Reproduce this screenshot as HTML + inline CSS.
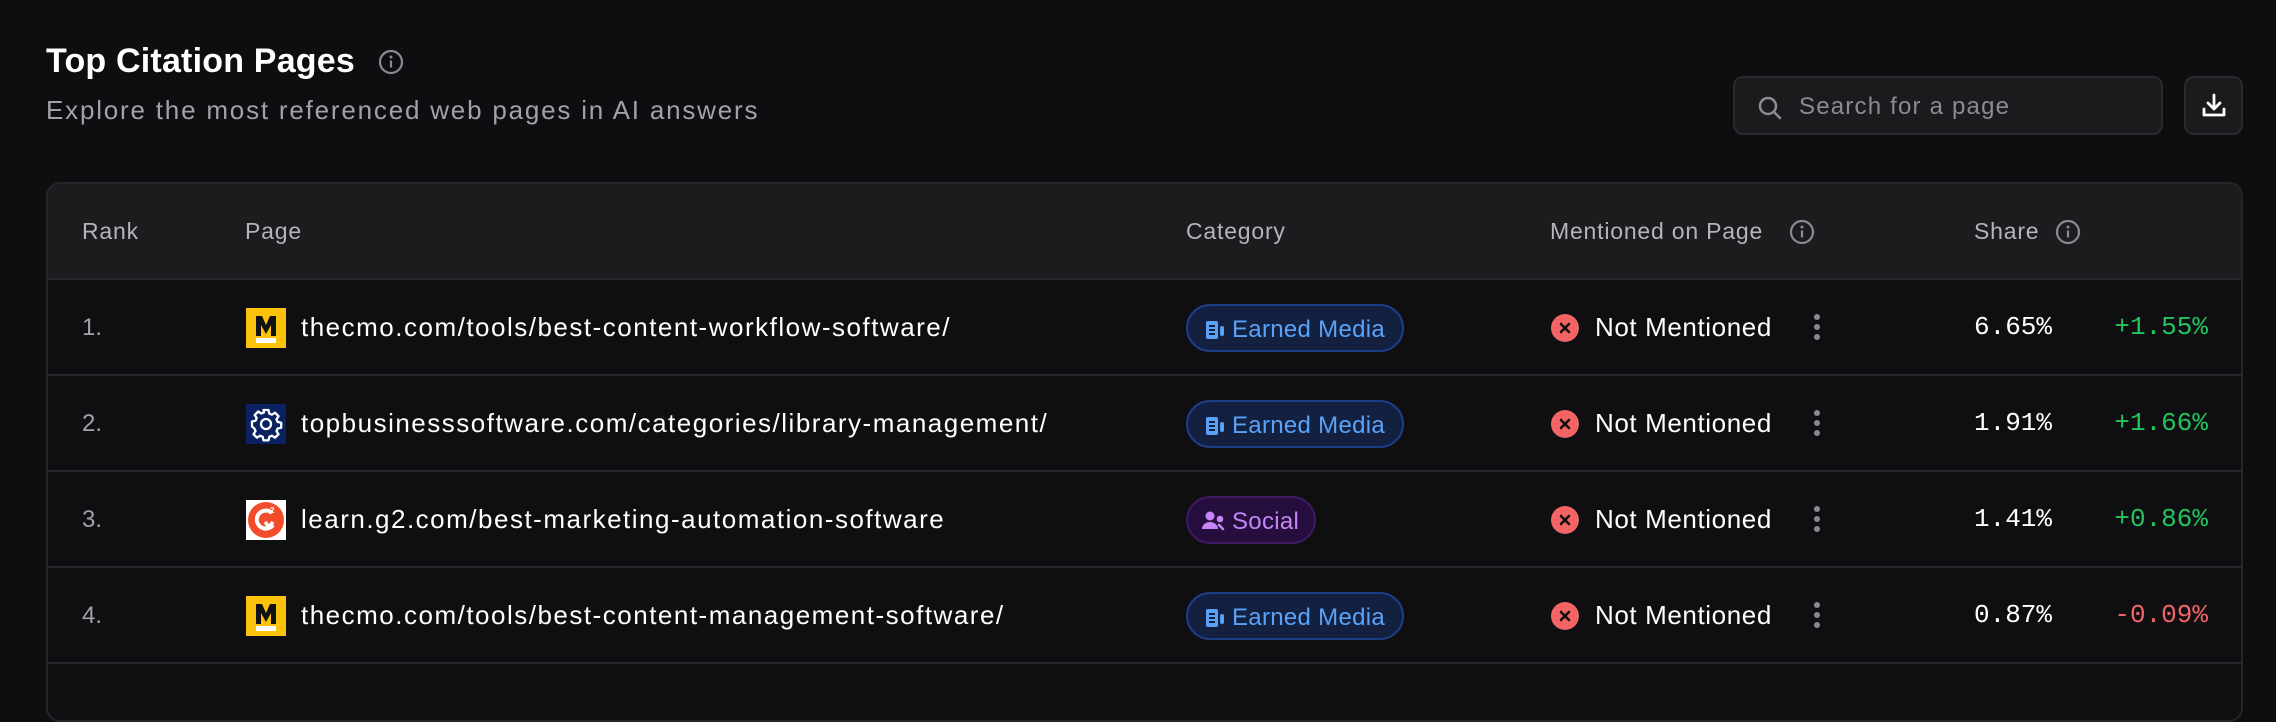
<!DOCTYPE html>
<html><head><meta charset="utf-8"><style>
*{box-sizing:border-box;margin:0;padding:0}
body{width:2276px;height:668px;overflow:hidden;background:#0e0e10;font-family:"Liberation Sans",sans-serif;color:#fff;position:relative}
.abs{position:absolute}
h1{position:absolute;left:46px;top:42px;font-size:34px;font-weight:bold;letter-spacing:0.2px}
.sub{left:46px;top:95px;font-size:26px;color:#a1a1aa;letter-spacing:1.8px}
.search{left:1733px;top:76px;width:430px;height:59px;border:2px solid #2a2a2e;border-radius:10px;background:#1b1b1e}
.search span{position:absolute;left:64px;top:15px;font-size:24px;color:#8b8b93;letter-spacing:1.2px}
.dl{left:2184px;top:76px;width:59px;height:59px;border:2px solid #2a2a2e;border-radius:10px;background:#1b1b1e}
.table{left:46px;top:182px;width:2197px;height:540px;border:2px solid #25252a;border-radius:14px;overflow:hidden;background:#0f0f11}
.head{position:absolute;left:0;top:0;right:0;height:96px;background:#1c1c1f;border-bottom:2px solid #25252a}
.th{position:absolute;top:34px;font-size:23px;color:#b4b4bb;letter-spacing:0.8px}
.row{position:absolute;left:0;right:0;height:96px;border-bottom:2px solid #25252a}
.c{position:absolute;top:32px;font-size:26px;white-space:nowrap}
.rank{left:34px;color:#a1a1aa;font-size:24px;top:34px}
.ico{position:absolute;left:198px;top:28px;width:40px;height:40px}
.url{left:253px;letter-spacing:1.5px}
.badge{position:absolute;left:1138px;top:24px;height:48px;border-radius:24px;font-size:24px;padding:10px 0 0 44px;letter-spacing:0.3px;white-space:nowrap}
.em{background:#13203f;border:2px solid #1b3f85;color:#5aa2f8;width:218px}
.so{background:#250e3d;border:2px solid #3f1a63;color:#c584f7;width:130px}
.x{position:absolute;left:1503px;top:34px;width:28px;height:28px;border-radius:50%;background:#f26465}
.nm{left:1547px;letter-spacing:0.6px}
.keb{position:absolute;left:1766px;top:34px;width:6px}
.keb i{display:block;width:6px;height:6px;border-radius:3px;background:#8a8a92;margin-bottom:4px}
.mono{font-family:"Liberation Mono",monospace;font-size:26px}
.share{left:1926px}
.chg{right:33px}
</style></head><body>
<h1>Top Citation Pages</h1>
<svg class="abs" style="left:377px;top:48px" width="28" height="28" viewBox="0 0 28 28"><circle cx="14" cy="14" r="11" fill="none" stroke="#8a8a92" stroke-width="2.2"/><circle cx="14" cy="9" r="1.5" fill="#8a8a92"/><path d="M14 12.5v7" stroke="#8a8a92" stroke-width="2.2"/></svg>
<div class="abs sub">Explore the most referenced web pages in AI answers</div>
<div class="abs search"><svg class="abs" style="left:22px;top:17px" width="26" height="26" viewBox="0 0 26 26"><circle cx="11" cy="11" r="8" fill="none" stroke="#8b8b93" stroke-width="2.5"/><path d="M17 17l6 6" stroke="#8b8b93" stroke-width="2.5" stroke-linecap="round"/></svg><span>Search for a page</span></div>
<div class="abs dl"><svg class="abs" style="left:15px;top:14px" width="26" height="28" viewBox="0 0 26 28"><path d="M13 3v14M7 11l6 6 6-6" fill="none" stroke="#fff" stroke-width="2.8" stroke-linecap="round" stroke-linejoin="round"/><path d="M3 17v6h20v-6" fill="none" stroke="#fff" stroke-width="2.8" stroke-linecap="round" stroke-linejoin="round"/></svg></div>

<div class="abs table">
<div class="head">
<div class="th" style="left:34px">Rank</div>
<div class="th" style="left:197px">Page</div>
<div class="th" style="left:1138px">Category</div>
<div class="th" style="left:1502px">Mentioned on Page</div>
<svg class="abs" style="left:1740px;top:34px" width="28" height="28" viewBox="0 0 28 28"><circle cx="14" cy="14" r="11" fill="none" stroke="#8a8a92" stroke-width="2.2"/><circle cx="14" cy="9" r="1.5" fill="#8a8a92"/><path d="M14 12.5v7" stroke="#8a8a92" stroke-width="2.2"/></svg>
<div class="th" style="left:1926px">Share</div>
<svg class="abs" style="left:2006px;top:34px" width="28" height="28" viewBox="0 0 28 28"><circle cx="14" cy="14" r="11" fill="none" stroke="#8a8a92" stroke-width="2.2"/><circle cx="14" cy="9" r="1.5" fill="#8a8a92"/><path d="M14 12.5v7" stroke="#8a8a92" stroke-width="2.2"/></svg>
</div>

<div class="row" style="top:96px">
<div class="c rank">1.</div>
<svg class="ico" viewBox="0 0 40 40"><rect width="40" height="40" fill="#fbc20b"/><path d="M10 28V8h6l4 9 4-9h6v20h-5V17l-5 9-5-9v11z" fill="#111"/><rect x="10" y="30" width="20" height="5" fill="#fff"/></svg>
<div class="c url">thecmo.com/tools/best-content-workflow-software/</div>
<div class="badge em"><svg class="abs" style="left:16px;top:13px" width="22" height="22" viewBox="0 0 22 22"><rect x="2" y="2" width="12" height="18" rx="2" fill="#5aa2f8"/><path d="M5 7h6M5 11h6M5 15h6" stroke="#13203f" stroke-width="2"/><rect x="16" y="7" width="4" height="10" rx="2" fill="#5aa2f8"/></svg>Earned Media</div>
<div class="x"><svg width="28" height="28" viewBox="0 0 28 28"><path d="M10 10l8 8M18 10l-8 8" stroke="#111" stroke-width="2.6" stroke-linecap="round"/></svg></div>
<div class="c nm">Not Mentioned</div>
<div class="keb"><i></i><i></i><i></i></div>
<div class="c mono share">6.65%</div>
<div class="c mono chg" style="color:#22c55e">+1.55%</div>
</div>

<div class="row" style="top:192px">
<div class="c rank">2.</div>
<svg class="ico" viewBox="0 0 40 40"><rect width="40" height="40" fill="#0b2262"/><g fill="none" stroke="#fff" stroke-width="2.3"><circle cx="20" cy="20" r="5"/><path d="M17.5 6h5l.8 3.6 2.6 1.1 3.1-2 3.5 3.5-2 3.1 1.1 2.6 3.6.8v5l-3.6.8-1.1 2.6 2 3.1-3.5 3.5-3.1-2-2.6 1.1-.8 3.6h-5l-.8-3.6-2.6-1.1-3.1 2-3.5-3.5 2-3.1-1.1-2.6L6 22.5v-5l3.6-.8 1.1-2.6-2-3.1 3.5-3.5 3.1 2 2.6-1.1z" stroke-linejoin="round"/></g></svg>
<div class="c url">topbusinesssoftware.com/categories/library-management/</div>
<div class="badge em"><svg class="abs" style="left:16px;top:13px" width="22" height="22" viewBox="0 0 22 22"><rect x="2" y="2" width="12" height="18" rx="2" fill="#5aa2f8"/><path d="M5 7h6M5 11h6M5 15h6" stroke="#13203f" stroke-width="2"/><rect x="16" y="7" width="4" height="10" rx="2" fill="#5aa2f8"/></svg>Earned Media</div>
<div class="x"><svg width="28" height="28" viewBox="0 0 28 28"><path d="M10 10l8 8M18 10l-8 8" stroke="#111" stroke-width="2.6" stroke-linecap="round"/></svg></div>
<div class="c nm">Not Mentioned</div>
<div class="keb"><i></i><i></i><i></i></div>
<div class="c mono share">1.91%</div>
<div class="c mono chg" style="color:#22c55e">+1.66%</div>
</div>

<div class="row" style="top:288px">
<div class="c rank">3.</div>
<svg class="ico" viewBox="0 0 40 40"><rect width="40" height="40" fill="#fff"/><circle cx="20" cy="20" r="18" fill="#f24c2b"/><path d="M26 13a9 9 0 1 0 1 12" fill="none" stroke="#fff" stroke-width="4"/><path d="M19 22l4 5 4-5" fill="none" stroke="#fff" stroke-width="3.5"/><text x="24" y="13" font-size="8" fill="#fff" font-family="Liberation Sans" font-weight="bold">2</text></svg>
<div class="c url">learn.g2.com/best-marketing-automation-software</div>
<div class="badge so"><svg class="abs" style="left:14px;top:12px" width="24" height="22" viewBox="0 0 24 22"><circle cx="8" cy="6" r="4.5" fill="#c584f7"/><path d="M0 19a8 7 0 0 1 16 0z" fill="#c584f7"/><circle cx="18" cy="9" r="3.3" fill="#c584f7"/><path d="M17 15l4 4" stroke="#c584f7" stroke-width="2.6" stroke-linecap="round"/></svg>Social</div>
<div class="x"><svg width="28" height="28" viewBox="0 0 28 28"><path d="M10 10l8 8M18 10l-8 8" stroke="#111" stroke-width="2.6" stroke-linecap="round"/></svg></div>
<div class="c nm">Not Mentioned</div>
<div class="keb"><i></i><i></i><i></i></div>
<div class="c mono share">1.41%</div>
<div class="c mono chg" style="color:#22c55e">+0.86%</div>
</div>

<div class="row" style="top:384px">
<div class="c rank">4.</div>
<svg class="ico" viewBox="0 0 40 40"><rect width="40" height="40" fill="#fbc20b"/><path d="M10 28V8h6l4 9 4-9h6v20h-5V17l-5 9-5-9v11z" fill="#111"/><rect x="10" y="30" width="20" height="5" fill="#fff"/></svg>
<div class="c url">thecmo.com/tools/best-content-management-software/</div>
<div class="badge em"><svg class="abs" style="left:16px;top:13px" width="22" height="22" viewBox="0 0 22 22"><rect x="2" y="2" width="12" height="18" rx="2" fill="#5aa2f8"/><path d="M5 7h6M5 11h6M5 15h6" stroke="#13203f" stroke-width="2"/><rect x="16" y="7" width="4" height="10" rx="2" fill="#5aa2f8"/></svg>Earned Media</div>
<div class="x"><svg width="28" height="28" viewBox="0 0 28 28"><path d="M10 10l8 8M18 10l-8 8" stroke="#111" stroke-width="2.6" stroke-linecap="round"/></svg></div>
<div class="c nm">Not Mentioned</div>
<div class="keb"><i></i><i></i><i></i></div>
<div class="c mono share">0.87%</div>
<div class="c mono chg" style="color:#f26465">-0.09%</div>
</div>
</div>
</body></html>
